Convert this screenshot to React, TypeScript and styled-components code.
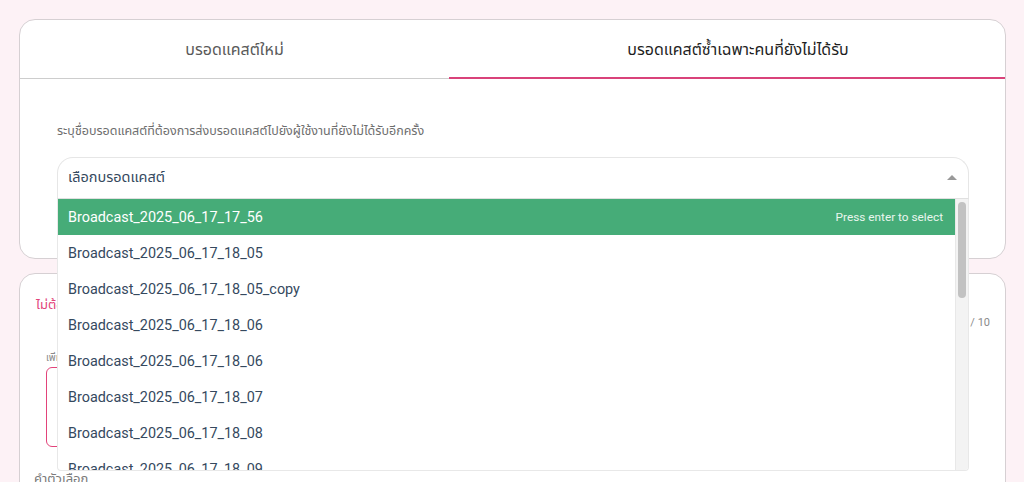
import React from "react";
import styled, { createGlobalStyle } from "styled-components";

const GlobalStyle = createGlobalStyle`
  html, body { margin: 0; padding: 0; }
  body {
    background: #fdf2f6;
    font-family: Roboto, "Noto Sans Thai", "Noto Sans", sans-serif;
    overflow: hidden;
  }
`;

const Page = styled.div`
  display: flex;
  flex-direction: column;
  gap: 14px;
  padding: 19px 18px 0 19px;
  height: 482px;
  box-sizing: border-box;
  overflow: hidden;
`;

const Card = styled.section`
  background: #ffffff;
  border: 1px solid #d6d0d3;
  border-radius: 16px;
  flex-shrink: 0;
  position: relative;
`;

const Tabs = styled.div`
  display: grid;
  grid-template-columns: 429px 1fr;
  height: 58px;
  border-bottom: 1px solid #cdcdcd;
`;

const Tab = styled.div<{ $active?: boolean }>`
  position: relative;
  display: flex;
  align-items: center;
  justify-content: center;
  padding-top: 2px;
  padding-left: ${(p) => (p.$active ? "22px" : "0")};
  font-size: 16px;
  color: ${(p) => (p.$active ? "#1f1f1f" : "#5a5a5a")};
  &::after {
    content: "";
    display: ${(p) => (p.$active ? "block" : "none")};
    position: absolute;
    left: 0;
    right: 0;
    bottom: -1px;
    height: 2px;
    background: #d9437a;
  }
`;

const CardBody = styled.div`
  padding: 44px 36px 59px 37px;
`;

const Hint = styled.div`
  font-size: 12.5px;
  line-height: 16px;
  color: #6e6e6e;
  margin-bottom: 18px;
`;

const SelectWrap = styled.div`
  position: relative;
  z-index: 10;
`;

const SelectBox = styled.div`
  height: 42px;
  box-sizing: border-box;
  border: 1px solid #e6e6e6;
  border-bottom-color: #e0e0e0;
  border-radius: 16px 16px 0 0;
  display: flex;
  align-items: center;
  justify-content: space-between;
  padding: 0 11px 0 10px;
  font-size: 14.5px;
  color: #35495e;
`;

const Caret = styled.span`
  width: 0;
  height: 0;
  border-left: 5px solid transparent;
  border-right: 5px solid transparent;
  border-bottom: 5px solid #999999;
  margin-top: -2px;
`;

const Dropdown = styled.div`
  position: absolute;
  top: 100%;
  left: 0;
  right: 0;
  height: 272px;
  box-sizing: border-box;
  background: #ffffff;
  border: 1px solid #e8e8e8;
  border-top: none;
  border-radius: 0 0 4px 4px;
  display: flex;
  overflow: hidden;
`;

const OptionList = styled.ul`
  list-style: none;
  margin: 0;
  padding: 0;
  flex: 1;
`;

const Option = styled.li<{ $highlight?: boolean }>`
  height: 36px;
  display: flex;
  align-items: center;
  justify-content: space-between;
  padding: 0 12px 0 10px;
  font-size: 14.4px;
  color: ${(p) => (p.$highlight ? "#ffffff" : "#35495e")};
  background: ${(p) => (p.$highlight ? "#46ac78" : "transparent")};
`;

const EnterHint = styled.span`
  font-size: 11.8px;
  color: #e9f6ee;
`;

const ScrollTrack = styled.div`
  width: 13px;
  background: #f3f3f3;
  border-left: 1px solid #e8e8e8;
  padding: 3px 2px;
  box-sizing: border-box;
`;

const ScrollThumb = styled.div`
  width: 8px;
  height: 96px;
  border-radius: 4px;
  background: #c2c2c2;
`;

const Card2Body = styled.div`
  padding: 21px 15px 0 16px;
  height: 240px;
`;

const Warn = styled.div`
  font-size: 13px;
  line-height: 20px;
  color: #e2437a;
`;

const Counter = styled.div`
  text-align: right;
  font-size: 11px;
  line-height: 16px;
  color: #8a8a8a;
  margin-top: 0;
`;

const Field = styled.div`
  margin: 20px 60px 0 10px;
`;

const FieldLabel = styled.div`
  font-size: 10px;
  line-height: 14px;
  color: #8a8a8a;
  margin-bottom: 2px;
`;

const TextArea = styled.div`
  height: 80px;
  box-sizing: border-box;
  border: 1px solid #e2437a;
  border-radius: 6px;
`;

const OptionsTitle = styled.div`
  margin-top: 23px;
  margin-left: -2px;
  font-size: 13px;
  line-height: 18px;
  color: #7a7a7a;
`;

const options = [
  "Broadcast_2025_06_17_17_56",
  "Broadcast_2025_06_17_18_05",
  "Broadcast_2025_06_17_18_05_copy",
  "Broadcast_2025_06_17_18_06",
  "Broadcast_2025_06_17_18_06",
  "Broadcast_2025_06_17_18_07",
  "Broadcast_2025_06_17_18_08",
  "Broadcast_2025_06_17_18_09",
  "Broadcast_2025_06_17_18_10",
];

export default function App() {
  return (
    <>
      <GlobalStyle />
      <Page>
        <Card>
          <Tabs>
            <Tab>บรอดแคสต์ใหม่</Tab>
            <Tab $active>บรอดแคสต์ซ้ำเฉพาะคนที่ยังไม่ได้รับ</Tab>
          </Tabs>
          <CardBody>
            <Hint>ระบุชื่อบรอดแคสต์ที่ต้องการส่งบรอดแคสต์ไปยังผู้ใช้งานที่ยังไม่ได้รับอีกครั้ง</Hint>
            <SelectWrap>
              <SelectBox>
                <span>เลือกบรอดแคสต์</span>
                <Caret />
              </SelectBox>
              <Dropdown>
                <OptionList>
                  {options.map((o, i) => (
                    <Option key={i} $highlight={i === 0}>
                      <span>{o}</span>
                      {i === 0 && <EnterHint>Press enter to select</EnterHint>}
                    </Option>
                  ))}
                </OptionList>
                <ScrollTrack>
                  <ScrollThumb />
                </ScrollTrack>
              </Dropdown>
            </SelectWrap>
          </CardBody>
        </Card>
        <Card>
          <Card2Body>
            <Warn>ไม่ต้องกรอกข้อความใหม่ ระบบจะส่งข้อความเดิมซ้ำ</Warn>
            <Counter>0 / 10</Counter>
            <Field>
              <FieldLabel>เพิ่มข้อความ</FieldLabel>
              <TextArea />
            </Field>
            <OptionsTitle>คำตัวเลือก</OptionsTitle>
          </Card2Body>
        </Card>
      </Page>
    </>
  );
}
